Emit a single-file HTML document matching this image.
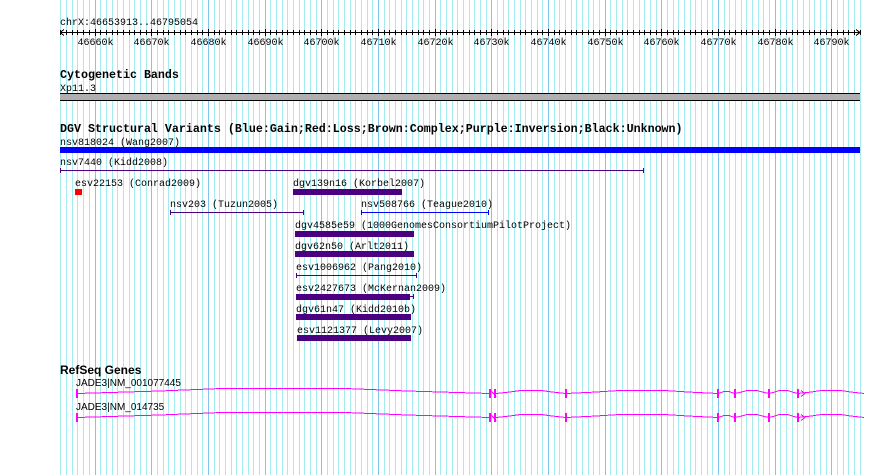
<!DOCTYPE html>
<html><head><meta charset="utf-8"><style>
body{margin:0;background:#fff;width:890px;height:475px;overflow:hidden;position:relative}
svg{position:absolute;left:0;top:0}
text{font-family:"Liberation Mono",monospace;font-size:10px;fill:#000}
.b{font-weight:bold;font-size:11.67px}
.s{font-family:"Liberation Sans",sans-serif;font-size:10px}
.sb{font-family:"Liberation Sans",sans-serif;font-size:12px;font-weight:bold}
</style></head><body>
<svg id="g" width="890" height="475" xmlns="http://www.w3.org/2000/svg" shape-rendering="crispEdges">
<g id="grid"></g>
<g id="ruler" stroke="#000" stroke-width="1"></g>
<text x="60" y="25">chrX:46653913..46795054</text>
<g id="lbl"></g>
<text x="60" y="78" class="b">Cytogenetic Bands</text>
<text x="60" y="91">Xp11.3</text>
<rect x="60" y="93" width="800" height="8" fill="#000"/>
<rect x="60" y="94" width="800" height="6" fill="#b0b0b0"/>
<text x="60" y="132" class="b">DGV Structural Variants (Blue:Gain;Red:Loss;Brown:Complex;Purple:Inversion;Black:Unknown)</text>
<text x="60" y="145">nsv818024 (Wang2007)</text>
<rect x="60" y="147" width="800" height="6" fill="#0000ff"/>
<text x="60" y="165">nsv7440 (Kidd2008)</text>
<g stroke="#4b0082" fill="none"><path d="M60.5 170.5H644M60.5 168v5M643.5 168v5"/></g>
<text x="75" y="186">esv22153 (Conrad2009)</text>
<rect x="75" y="189" width="7" height="6" fill="#ff0000"/>
<text x="293" y="186">dgv139n16 (Korbel2007)</text>
<rect x="293" y="189" width="109" height="6" fill="#4b0082"/>
<text x="170" y="207">nsv203 (Tuzun2005)</text>
<g stroke="#4b0082" fill="none"><path d="M170.5 212.5H304M170.5 210v5M303.5 210v5"/></g>
<text x="361" y="207">nsv508766 (Teague2010)</text>
<g stroke="#0000ff" fill="none"><path d="M361.5 212.5H489M361.5 210v5M488.5 210v5"/></g>
<text x="295" y="228">dgv4585e59 (1000GenomesConsortiumPilotProject)</text>
<rect x="295" y="231" width="119" height="6" fill="#4b0082"/>
<text x="295" y="249">dgv62n50 (Arlt2011)</text>
<rect x="295" y="251" width="119" height="6" fill="#4b0082"/>
<text x="296" y="270">esv1006962 (Pang2010)</text>
<g stroke="#4b0082" fill="none"><path d="M296.5 275.5H417M296.5 273v5M416.5 273v5"/></g>
<text x="296" y="291">esv2427673 (McKernan2009)</text>
<rect x="296" y="294" width="114" height="6" fill="#4b0082"/>
<g stroke="#4b0082" fill="none"><path d="M410 296.5H414M413.5 294v5"/></g>
<text x="296" y="312">dgv61n47 (Kidd2010b)</text>
<rect x="296" y="314" width="115" height="6" fill="#4b0082"/>
<text x="297" y="333">esv1121377 (Levy2007)</text>
<rect x="297" y="335" width="114" height="6" fill="#4b0082"/>
<text x="60" y="374" class="sb">RefSeq Genes</text>
<text x="76" y="386" class="s">JADE3|NM_001077445</text>
<text x="76" y="410" class="s">JADE3|NM_014735</text>
<g id="genes" stroke="#ff00ff" fill="none" stroke-width="1"></g>
</svg>
<script>
var ns="http://www.w3.org/2000/svg";
function X(k){return 60+(k-46653.913)*5.668;}
var g=document.getElementById('grid'),r=document.getElementById('ruler'),l=document.getElementById('lbl');
function ln(p,x1,y1,x2,y2,c){var e=document.createElementNS(ns,'line');e.setAttribute('x1',x1);e.setAttribute('y1',y1);e.setAttribute('x2',x2);e.setAttribute('y2',y2);if(c)e.setAttribute('stroke',c);p.appendChild(e);}
function rc(p,x,y,w,h,c){var e=document.createElementNS(ns,'rect');e.setAttribute('x',x);e.setAttribute('y',y);e.setAttribute('width',w);e.setAttribute('height',h);e.setAttribute('fill',c);e.setAttribute('stroke','none');p.appendChild(e);}
for(var k=46654;k<=46795;k++){var x=Math.round(X(k))+0.5;var maj=k%10==0;
 ln(g,x,0,x,475,maj?'#80c4f0':'#a4ecf0');
 ln(r,x,maj?29:30,x,maj?36:35);
 if(maj){var t=document.createElementNS(ns,'text');t.setAttribute('x',x);t.setAttribute('y',45);t.setAttribute('text-anchor','middle');t.textContent=k+'k';l.appendChild(t);}
}
ln(r,60,32.5,860,32.5);ln(r,60,32.5,64,29.5);ln(r,60,32.5,64,35.5);ln(r,860,32.5,856,29.5);ln(r,860,32.5,856,35.5);
var G=document.getElementById('genes');
function gene(y){
 var p='';
 var segs=[[77,490,5],[496,566,3],[566,718,3],[718,735,2],[735,769,3],[769,798,3],[798,864,3]];
 segs.forEach(function(s){var a=s[0],b=s[1],h=s[2];
  p+='M'+a+' '+(y+0.5)+' L'+(a+(b-a)*0.2)+' '+(y+0.5-h*0.5)+' L'+(a+(b-a)*0.35)+' '+(y+0.5-h)+' L'+(a+(b-a)*0.65)+' '+(y+0.5-h)+' L'+(a+(b-a)*0.8)+' '+(y+0.5-h*0.5)+' L'+b+' '+(y+0.5)+' ';});
 p+='M490 '+(y-3.5)+'L496 '+(y+3.5);
 var e=document.createElementNS(ns,'path');e.setAttribute('d',p);G.appendChild(e);
 var a=document.createElementNS(ns,'path');a.setAttribute('d','M801 '+(y-2.5)+'L805 '+(y+0.5)+'L801 '+(y+3.5));G.appendChild(a);
 rc(G,76,y-4,2,9,'#ff00ff');
 [489,494].forEach(function(x){rc(G,x,y-4,2,9,'#ff00ff');});
 [565,717,734,768,797].forEach(function(x){rc(G,x,y-4,2,9,'#ff00ff');});
}
gene(393);gene(417);
</script>
</body></html>
